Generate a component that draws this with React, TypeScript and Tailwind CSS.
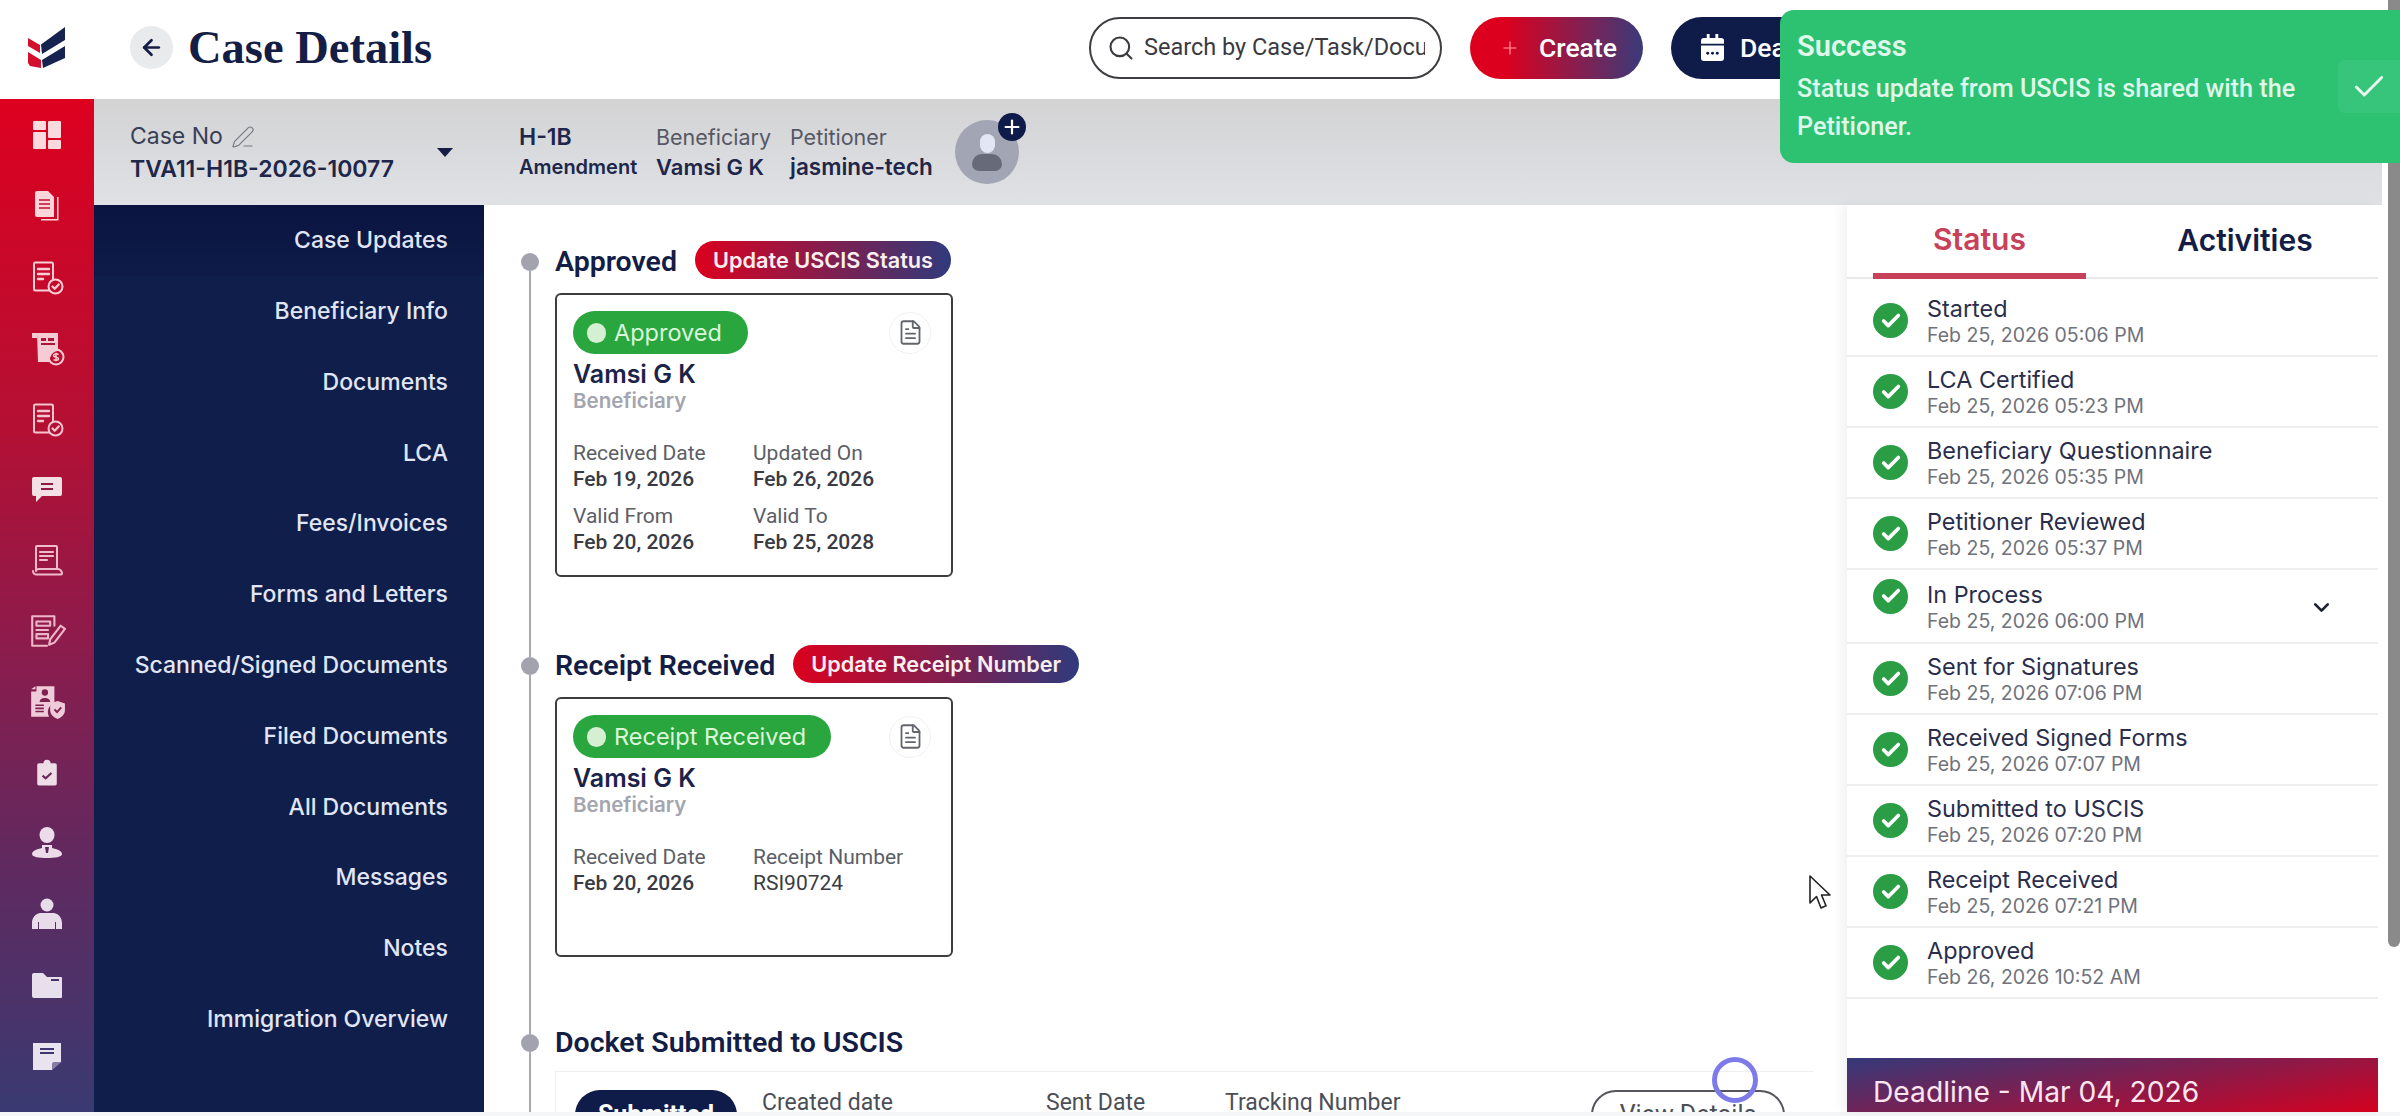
import { ArrowLeft, Check, ChevronDown, FileText, PenLine, Plus, Search } from "lucide-react";
import type { ReactNode } from "react";

const S = { fill: "none", stroke: "currentColor", strokeWidth: 2, strokeLinecap: "round", strokeLinejoin: "round" } as const;
const Ic = ({ c, w = 36, children }: { c: string; w?: number; children: ReactNode }) => (
  <svg viewBox="0 0 36 36" width={w} height={w} className={c} fill="currentColor">{children}</svg>
);

const DocCheck = () => (
  <>
    <g {...S}>
      <path d="M24 20V5a1.5 1.5 0 0 0-1.5-1.5H6.500A1.5 1.5 0 0 0 5 5v25a1.5 1.5 0 0 0 1.5 1.5H20" />
      <path d="M9 10h11M9 15h11M9 20h5" strokeWidth="2.400" />
      <circle cx="26.500" cy="27.500" r="7" />
      <path d="M23.500 27.500l2.200 2.300 4-4.400" strokeWidth="2.200" />
    </g>
  </>
);

const railIcons: ReactNode[] = [
  <Ic key="1" c="text-[#fbdadd]"><rect x="4" y="4" width="13" height="9" rx="1" /><rect x="19" y="4" width="13" height="17" rx="1" /><rect x="4" y="15" width="13" height="17" rx="1" /><rect x="19" y="23" width="13" height="9" rx="1" /></Ic>,
  <Ic key="2" c="text-[#fbd5da]"><path d="M6 5a2 2 0 0 1 2-2h11l6 6v20H8a2 2 0 0 1-2-2z" /><path d="M10 12h11M10 16h11M10 20h11" stroke="#c0102f" strokeWidth="1.700" /><path d="M28 9v22H12v1.500h17.500V9z" /></Ic>,
  <Ic key="3" c="text-[#f9cfd6]"><DocCheck /></Ic>,
  <Ic key="4" c="text-[#f7cbd3]"><path d="M3 3h5v5H3z" /><path d="M8 3h21v18a9 9 0 0 0-8 11H9z" /><path d="M12 8h5v3h-5zM19 8h6v3h-6z" fill="#ad1237" /><path d="M12 14h14" stroke="#ad1237" strokeWidth="2" /><circle cx="27" cy="27" r="7.500" fill="none" stroke="currentColor" strokeWidth="2" /><path d="M29.500 24.600c-1-1-5-1.200-5 .9 0 2.400 5 .9 5 3.200 0 2-4 1.900-5 .7M27 22.800v8.400" fill="none" stroke="currentColor" strokeWidth="1.500" /></Ic>,
  <Ic key="5" c="text-[#f3c3ce]"><DocCheck /></Ic>,
  <Ic key="6" c="text-[#f3e0e5]"><path d="M5 6h26a2 2 0 0 1 2 2v15a2 2 0 0 1-2 2H13l-6 6v-6H5a2 2 0 0 1-2-2V8a2 2 0 0 1 2-2z" /><path d="M12 13h12M12 18h12" stroke="#8f1a45" strokeWidth="2.200" /></Ic>,
  <Ic key="7" c="text-[#efbccc]"><g {...S}><path d="M7 28V5a1 1 0 0 1 1-1h19a1 1 0 0 1 1 1v22" /><path d="M4 29a3.500 3.500 0 0 0 4 3.500h24a1 1 0 0 0 1-1c0-2.500-2-4.500-4-4.500H10c-2 0-3 1-3 2" /><path d="M11 10h13M11 14h13M11 18h7" strokeWidth="2.200" /></g></Ic>,
  <Ic key="8" c="text-[#eeb6c8]" w={38}><g {...S}><path d="M25 13V4H4v28h14" /><path d="M8 9h13v4H8zM8 17h11M8 21h11v4H8z" /><path d="M20 31l1-5L31 13l4 3L25 29z" /></g></Ic>,
  <Ic key="9" c="text-[#efcad8]" w={38}><path d="M8 3h17v16a9 9 0 0 0-5 13H3V8h5z" /><path d="M3 6l4-3v3z" /><circle cx="16" cy="9" r="3" fill="#7f214f" /><path d="M11 18c0-5 10-5 10 0z" fill="#7f214f" /><path d="M7 21h8M7 24h8M7 27h8" stroke="#7f214f" strokeWidth="1.500" /><path d="M28 17l7 2.500v6c0 4-3 7-7 8.500-4-1.500-7-4.500-7-8.500v-6z" /><path d="M25 25l2.500 2.500 4-4.500" stroke="#7f214f" strokeWidth="1.800" fill="none" /></Ic>,
  <Ic key="10" c="text-[#eedde6]" w={32}><path d="M9 7h5a4 4 0 0 1 8 0h5a2 2 0 0 1 2 2v21a2 2 0 0 1-2 2H9a2 2 0 0 1-2-2V9a2 2 0 0 1 2-2z" /><path d="M13 21l3.500 3 6.500-6" stroke="#6b2658" strokeWidth="2.400" fill="none" /></Ic>,
  <Ic key="11" c="text-[#ecdbe8]"><ellipse cx="18" cy="10" rx="7.500" ry="8" /><path d="M13 20h10v3c5 1 10 3 10 6 0 3-7 4-15 4s-15-1-15-4c0-3 5-5 10-6z" /><path d="M16 22h4l-1 6h-2z" fill="#5c2a5f" /></Ic>,
  <Ic key="12" c="text-[#e9dcea]"><circle cx="18" cy="9" r="6.500" /><path d="M11 17h14c5 1 8 5 8 10v6h-6v-7h-1v7H10v-7H9v7H3v-6c0-5 3-9 8-10z" /></Ic>,
  <Ic key="13" c="text-[#e8dfec]"><path d="M5 6h9l4 4h14a1 1 0 0 1 1 1v19a1 1 0 0 1-1 1H5a2 2 0 0 1-2-2V8a2 2 0 0 1 2-2z" /><path d="M22 12h8v2h-8z" fill="#49326a" /></Ic>,
  <Ic key="14" c="text-[#e9e3f0]"><path d="M4 5h28v19l-9 8H4z" /><path d="M11 11h14M11 15h14" stroke="#40366f" strokeWidth="2" /><path d="M23 32v-6a2 2 0 0 1 2-2h7z" fill="#40366f" opacity=".6" /></Ic>,
];

const nav = ["Case Updates", "Beneficiary Info", "Documents", "LCA", "Fees/Invoices", "Forms and Letters", "Scanned/Signed Documents", "Filed Documents", "All Documents", "Messages", "Notes", "Immigration Overview"];

const steps = [
  ["Started", "Feb 25, 2026 05:06 PM"],
  ["LCA Certified", "Feb 25, 2026 05:23 PM"],
  ["Beneficiary Questionnaire", "Feb 25, 2026 05:35 PM"],
  ["Petitioner Reviewed", "Feb 25, 2026 05:37 PM"],
  ["In Process", "Feb 25, 2026 06:00 PM"],
  ["Sent for Signatures", "Feb 25, 2026 07:06 PM"],
  ["Received Signed Forms", "Feb 25, 2026 07:07 PM"],
  ["Submitted to USCIS", "Feb 25, 2026 07:20 PM"],
  ["Receipt Received", "Feb 25, 2026 07:21 PM"],
  ["Approved", "Feb 26, 2026 10:52 AM"],
];

function Field({ label, value, weight = "font-medium" }: { label: string; value: string; weight?: string }) {
  return (
    <div>
      <div className="text-[21px] leading-[26px] text-[#5c5e66]">{label}</div>
      <div className={`text-[21px] leading-[26px] text-[#3a3b42] ${weight}`}>{value}</div>
    </div>
  );
}

function Card({ status, height, badge, children }: { status: string; height: string; badge: string; children: ReactNode }) {
  return (
    <div className={`${height} w-[398px] rounded-[6px] border-2 border-[#3d3d40] bg-white pl-[16px] pt-[16px] pr-[20px]`}>
      <div className="flex items-center justify-between">
        <div className={`${badge} flex h-[43px] items-center gap-[8px] rounded-full bg-[#2aa63f] pl-[14px] text-[23.5px] text-[#dcf6da]`}>
          <span className="h-[20px] w-[19px] rounded-full bg-[#d5efd2]" />
          {status}
        </div>
        <div className="flex h-[42px] w-[42px] items-center justify-center rounded-full border border-[#f1f1f1]">
          <FileText size={27} strokeWidth={1.6} className="text-[#63656c]" />
        </div>
      </div>
      <div className="mt-[5px] text-[25px] leading-[30px] font-semibold text-[#1c2348]">Vamsi G K</div>
      <div className="text-[20.5px] leading-[24px] font-semibold text-[#a3a5af]">Beneficiary</div>
      <div className="mt-[27px] grid grid-cols-[180px_180px] gap-y-[11px] font-[Roboto,sans-serif]">{children}</div>
    </div>
  );
}

function Section({ first, title, pb, action, children }: { first?: boolean; title: string; pb: string; action?: string; children: ReactNode }) {
  return (
    <div className="flex gap-[16px]">
      <div className="flex w-[18px] flex-col items-center">
        <div className={first ? "h-[12px]" : "h-[12px] w-[2px] bg-[#a8a9b4]"} />
        <div className="h-[18px] w-[18px] rounded-full bg-[#a2a3ae]" />
        <div className="w-[2px] flex-1 bg-[#a8a9b4]" />
      </div>
      <div className={`${pb} flex-1`}>
        <div className="flex h-[38px] items-center gap-[18px]">
          <div className="pt-[4px] font-[Roboto,sans-serif] text-[28.5px] font-semibold text-[#141d45]">{title}</div>
          {action && (
            <div className="flex h-[38px] items-center rounded-full bg-[linear-gradient(90deg,#dc001e,#2f3a7c)] px-[18px] text-[21.7px] font-semibold whitespace-nowrap text-[#fbeef0]">
              {action}
            </div>
          )}
        </div>
        {children}
      </div>
    </div>
  );
}

export default function App() {
  return (
    <div className="relative flex h-[1116px] w-[2400px] flex-col overflow-hidden bg-[#f5f6f7] font-[Inter,sans-serif]">
      <div className="flex h-[1112px] bg-white">
        {/* left rail */}
        <div className="flex w-[94px] flex-col">
          <div className="flex h-[99px] items-center justify-center bg-white pb-[4px]">
            <svg viewBox="0 0 38 41" width="38" height="41">
              <path d="M0 11l12 7v8L0 19z" fill="#d2102e" />
              <path d="M13 17.500L37 0v13L14 27z" fill="#16224f" />
              <path d="M0 25l13 8v8l-11-2-2-3z" fill="#d2102e" />
              <path d="M14 33l23-14v12L15 41z" fill="#16224f" />
            </svg>
          </div>
          <div className="flex flex-1 flex-col items-center bg-[linear-gradient(180deg,#dd001f_0%,#b31034_33%,#8e1b4b_53%,#5f2a60_76%,#3a3a72_100%)] pt-[1px]">
            {railIcons.map((icon, i) => (
              <div key={i} className="flex h-[70.8px] w-full shrink-0 items-center justify-center">{icon}</div>
            ))}
          </div>
        </div>

        {/* main */}
        <div className="flex min-w-0 flex-1 flex-col">
          <header className="flex h-[99px] shrink-0 items-center pb-[4px] pl-[36px] pr-[491px]">
            <div className="flex h-[43px] w-[43px] items-center justify-center rounded-full bg-[#e9eaec]">
              <ArrowLeft size={25} strokeWidth={2.6} className="text-[#141d45]" />
            </div>
            <h1 className="ml-[15px] font-['Liberation_Serif',serif] text-[46.5px] font-bold text-[#141d45]">Case Details</h1>
            <div className="flex-1" />
            <div className="flex h-[62px] w-[353px] items-center gap-[9px] rounded-full border-2 border-[#3d3d42] bg-white pl-[16px] font-[Roboto,sans-serif] text-[23.5px] text-[#3a3a40]">
              <Search size={28} strokeWidth={1.8} className="shrink-0" />
              <span className="w-[281px] overflow-hidden whitespace-nowrap">Search by Case/Task/Document</span>
            </div>
            <div className="ml-[28px] flex h-[62px] w-[173px] items-center gap-[19px] rounded-full bg-[linear-gradient(90deg,#dc001e_20%,#3a3a7a)] pl-[30px] font-[Roboto,sans-serif] text-[26.5px] font-medium text-white">
              <Plus size={20} strokeWidth={2} className="text-[#ff6f7c]" />
              Create
            </div>
            <div className="ml-[28px] flex h-[62px] w-[220px] items-center gap-[16px] rounded-full bg-[#0f1b48] pl-[30px] font-[Roboto,sans-serif] text-[26.5px] font-medium text-white">
              <svg viewBox="0 0 24 28" width="23" height="27" fill="currentColor">
                <path d="M6 0h3v4h6V0h3v4h3a3 3 0 0 1 3 3v3H0V7a3 3 0 0 1 3-3h3z" />
                <path d="M0 12h24v13a3 3 0 0 1-3 3H3a3 3 0 0 1-3-3z" />
                <circle cx="7" cy="20" r="1.500" fill="#0f1b48" /><circle cx="12" cy="20" r="1.500" fill="#0f1b48" /><circle cx="17" cy="20" r="1.500" fill="#0f1b48" />
              </svg>
              Deadlines
            </div>
          </header>

          <div className="flex h-[106px] shrink-0 items-center bg-[linear-gradient(180deg,#d3d3d4,#dfe1e5)] pl-[36px] text-[#20264a]">
            <div className="w-[307px] pt-[2px]">
              <div className="flex items-center gap-[8px] text-[23px] leading-[33px] text-[#383e56]">
                Case No
                <PenLine size={24} strokeWidth={1.2} className="text-[#777a84]" />
              </div>
              <div className="text-[23px] leading-[33px] font-semibold whitespace-nowrap">TVA11-H1B-2026-10077</div>
            </div>
            <div className="h-0 w-0 border-x-[8px] border-t-[9px] border-x-transparent border-t-[#141d45]" />
            <div className="ml-[66px] w-[137px]">
              <div className="text-[23px] leading-[30px] font-semibold">H-1B</div>
              <div className="text-[20px] leading-[30px] font-semibold">Amendment</div>
            </div>
            <div className="w-[134px]">
              <div className="text-[21.5px] leading-[30px] text-[#555865]">Beneficiary</div>
              <div className="text-[22px] leading-[30px] font-semibold">Vamsi G K</div>
            </div>
            <div className="w-[165px]">
              <div className="text-[21.5px] leading-[30px] text-[#555865]">Petitioner</div>
              <div className="text-[22.5px] leading-[30px] font-semibold">jasmine-tech</div>
            </div>
            <div className="relative flex h-[64px] w-[64px] flex-col items-center justify-center rounded-full bg-[#a2a5b3]">
              <div className="relative z-10 h-[19px] w-[15px] rounded-full bg-[#e3e6f3]" />
              <div className="mt-[1px] h-[17px] w-[30px] rounded-t-[14px] rounded-b-[10px] bg-[#666a79]" />
              <div className="absolute -right-[7px] -top-[7px] z-20 flex h-[28px] w-[28px] items-center justify-center rounded-full bg-[#0f1b48] text-white">
                <Plus size={22} strokeWidth={2.4} />
              </div>
            </div>
          </div>

          <div className="flex min-h-0 flex-1">
            <nav className="flex w-[390px] shrink-0 flex-col bg-[#101e4b]">
              {nav.map((n, i) => (
                <div
                  key={n}
                  className={`flex h-[70.8px] shrink-0 items-center justify-end pr-[36px] text-[23px] font-medium whitespace-nowrap text-[#e1e6f6] ${i === 0 ? "bg-[linear-gradient(180deg,#0a1440,#0e1b48)]" : ""}`}
                >
                  {n}
                </div>
              ))}
            </nav>

            <div className="min-w-0 flex-1 overflow-hidden pl-[37px] pr-[33px] pt-[36px]">
              <Section first title="Approved" pb="pb-[68px]" action="Update USCIS Status">
                <div className="mt-[14px]">
                  <Card status="Approved" height="h-[284px]" badge="w-[175px]">
                    <Field label="Received Date" value="Feb 19, 2026" />
                    <Field label="Updated On" value="Feb 26, 2026" />
                    <Field label="Valid From" value="Feb 20, 2026" />
                    <Field label="Valid To" value="Feb 25, 2028" />
                  </Card>
                </div>
              </Section>
              <Section title="Receipt Received" pb="pb-[65px]" action="Update Receipt Number">
                <div className="mt-[14px]">
                  <Card status="Receipt Received" height="h-[260px]" badge="w-[258px]">
                    <Field label="Received Date" value="Feb 20, 2026" />
                    <Field label="Receipt Number" value="RSI90724" weight="font-normal" />
                  </Card>
                </div>
              </Section>
              <Section title="Docket Submitted to USCIS" pb="pb-[40px]">
                <div className="mt-[11px] flex border-l border-t border-[#eeeff1] pl-[19px] pt-[18px] pr-[29px] font-[Roboto,sans-serif] text-[23px] text-[#4c4e56]">
                  <div className="flex h-[50px] w-[162px] items-center justify-center rounded-full bg-[#0f1b48] text-[25px] font-bold text-white">Submitted</div>
                  <div className="ml-[25px] w-[284px] leading-[26px]">Created date</div>
                  <div className="w-[179px] leading-[26px]">Sent Date</div>
                  <div className="flex-1 leading-[26px]">Tracking Number</div>
                  <div className="flex h-[50px] w-[194px] items-center justify-center rounded-full border-2 border-[#55565c] text-[25px]">View Details</div>
                </div>
              </Section>
            </div>

            <aside className="flex w-[535px] shrink-0 flex-col bg-white pr-[4px] shadow-[-6px_0_10px_rgba(0,0,0,0.05)]">
              <div className="relative flex h-[74px] shrink-0 border-b-2 border-[#e9eaed] pl-[26px] text-[30px] font-semibold">
                <div className="-mb-[2px] flex w-[213px] items-center justify-center border-b-[6px] border-[#c8415a] text-[#c8415a]">Status</div>
                <div className="flex flex-1 items-center justify-center pb-[2px] pl-[26px] text-[#141d45]">Activities</div>
              </div>
              <div className="pt-[7px]">
                {steps.map(([t, d]) => {
                  const open = t === "In Process";
                  return (
                    <div key={t} className={`flex items-center border-b-2 border-[#eceef0] pl-[26px] pr-[44px] ${open ? "h-[74px]" : "h-[71px]"}`}>
                      <div className={`flex h-[35px] w-[35px] shrink-0 items-center justify-center rounded-full bg-[#2a9d45] ${open ? "mb-[20px]" : ""}`}>
                        <Check size={22} strokeWidth={4} className="text-white" />
                      </div>
                      <div className="ml-[19px] flex-1 pt-[3px]">
                        <div className="text-[23.4px] leading-[26px] text-[#2a2e4c]">{t}</div>
                        <div className="text-[19.5px] leading-[26px] text-[#6f727b]">{d}</div>
                      </div>
                      {open && <ChevronDown size={25} strokeWidth={2.6} className="mt-[3px] text-[#1c2030]" />}
                    </div>
                  );
                })}
              </div>
              <div className="mt-auto flex h-[54px] shrink-0 items-center bg-[linear-gradient(170deg,#34397a,#d4001f)] pl-[26px] pt-[15px] text-[28.2px] whitespace-nowrap text-[#fbe6ef]">
                Deadline - Mar 04, 2026
              </div>
            </aside>
          </div>
        </div>

        {/* page scrollbar */}
        <div className="w-[18px] shrink-0 pl-[6px]">
          <div className="h-[947px] w-[12px] rounded-b-[6px] bg-[#8a8a8a]" />
        </div>
      </div>

      {/* toast */}
      <div className="absolute right-0 top-[10px] flex h-[153px] w-[620px] rounded-l-[14px] bg-[#2dc172] font-[Roboto,sans-serif] text-[#dff8e9]">
        <div className="w-[558px] pl-[17px] pt-[18px]">
          <div className="text-[29px] leading-[36px] font-semibold">Success</div>
          <div className="mt-[6px] text-[25.2px] leading-[38px] font-medium">Status update from USCIS is shared with the Petitioner.</div>
        </div>
        <div className="mt-[50px] flex h-[53px] w-[62px] items-center justify-center rounded-l-[6px] bg-[#37c57b]">
          <Check size={38} strokeWidth={1.8} className="text-[#eafaf1]" />
        </div>
      </div>

      {/* click marker */}
      <div className="absolute left-[1712px] top-[1057px] h-[46px] w-[46px] rounded-full border-[5px] border-[#7d7bea]" />

      {/* mouse cursor */}
      <svg viewBox="0 0 22 36" width="22" height="36" className="absolute left-[1809px] top-[875px]">
        <path d="M1 1v27l6.500-6.500L12 33l5-2.200-4.500-10.800H21z" fill="#fff" stroke="#222" strokeWidth="1.600" strokeLinejoin="round" />
      </svg>
    </div>
  );
}
